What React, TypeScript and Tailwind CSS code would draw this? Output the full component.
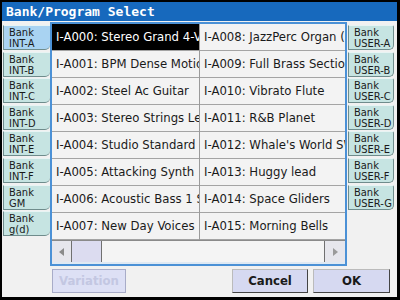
import React from 'react';

const left = ['INT-A', 'INT-B', 'INT-C', 'INT-D', 'INT-E', 'INT-F', 'GM', 'g(d)'];
const right = ['USER-A', 'USER-B', 'USER-C', 'USER-D', 'USER-E', 'USER-F', 'USER-G'];

const col1 = [
  'I-A000: Stereo Grand 4-Voice',
  'I-A001: BPM Dense Motion',
  'I-A002: Steel Ac Guitar',
  'I-A003: Stereo Strings Legato',
  'I-A004: Studio Standard Kit',
  'I-A005: Attacking Synth',
  'I-A006: Acoustic Bass 1 Solo',
  'I-A007: New Day Voices',
];
const col2 = [
  'I-A008: JazzPerc Organ (',
  'I-A009: Full Brass Section',
  'I-A010: Vibrato Flute',
  'I-A011: R&B Planet',
  "I-A012: Whale's World SW",
  'I-A013: Huggy lead',
  'I-A014: Space Gliders',
  'I-A015: Morning Bells',
];

const cond = { fontFamily: '"DejaVu Sans Condensed", "DejaVu Sans", sans-serif' };

function Tab({ name, active, side }: { name: string; active?: boolean; side: 'l' | 'r' }) {
  return (
    <div
      className={
        'h-[25px] shrink-0 border border-[#6f8c8c] border-t-[#e8f4f4] pl-[5px] text-[11px] leading-[11px] text-[#1a1a1a] ' +
        (side === 'l' ? 'rounded-br-[5px] border-r-0 ' : 'rounded-br-[5px] rounded-tr-[2px] ') +
        (active ? 'bg-[#a9d3f2]' : 'bg-[#c6e4e2]')
      }
      style={cond}
    >
      <div className="pt-[1px]">Bank</div>
      <div>{name}</div>
    </div>
  );
}

function Row({ text, sel }: { text: string; sel?: boolean }) {
  return (
    <div
      className={
        'flex h-[27px] items-center overflow-hidden whitespace-nowrap border-b border-[#a4a4a4] pl-[4px] text-[13px] ' +
        (sel ? 'bg-black text-white' : 'bg-[#f3f3f3] text-[#1a1a1a]')
      }
      style={cond}
    >
      {text}
    </div>
  );
}

export default function App() {
  return (
    <div className="flex h-[300px] w-[400px] flex-col border-[2px] border-r-[3px] border-b-[3px] border-black bg-[#f1f1f1]">
      <div
        className="flex h-[19px] shrink-0 items-center bg-[#1769bd] pl-[4px] text-[13px] font-bold text-white"
        style={{ fontFamily: '"DejaVu Sans Mono", monospace' }}
      >
        Bank/Program Select
      </div>
      <div className="flex h-[245px] shrink-0">
        <div className="flex w-[48px] shrink-0 flex-col gap-[1.6px] pt-[4px] pl-[1px]">
          {left.map((n, i) => (
            <Tab key={n} name={n} side="l" active={i === 0} />
          ))}
        </div>
        <div className="mt-[1px] flex w-[297px] shrink-0 flex-col border-2 border-[#4b91d6] bg-[#dfe9f3]">
          <div className="flex">
            <div className="w-[148px] border-r border-[#9a9a9a]">
              {col1.map((t, i) => (
                <Row key={t} text={t} sel={i === 0} />
              ))}
            </div>
            <div className="w-0 flex-1">
              {col2.map((t) => (
                <Row key={t} text={t} />
              ))}
            </div>
          </div>
          <div className="flex h-[22px] items-stretch border-t border-[#8a8a8a] bg-[#f4f4f4]">
            <div className="flex w-[20px] items-center justify-center border-r border-[#707070] bg-[#e6e6ec]">
              <svg width="5" height="8" viewBox="0 0 5 8">
                <path d="M5 0 L0 4 L5 8Z" fill="#8a8a8a" />
              </svg>
            </div>
            <div className="w-[30px] border-r border-[#707070] bg-[#dcdcf0]" />
            <div className="flex-1" />
            <div className="flex w-[21px] items-center justify-center border-l border-[#707070] bg-[#e6e6ec]">
              <svg width="5" height="8" viewBox="0 0 5 8">
                <path d="M0 0 L5 4 L0 8Z" fill="#9a9a9a" />
              </svg>
            </div>
          </div>
        </div>
        <div className="flex w-[47px] shrink-0 flex-col gap-[1.6px] pt-[4px] pl-[1px]">
          {right.map((n) => (
            <Tab key={n} name={n} side="r" />
          ))}
        </div>
      </div>
      <div className="flex flex-1 items-start pt-[3px] pl-[50px] font-bold" style={cond}>
        <div className="flex h-[24px] w-[74px] items-center justify-center border border-[#a8acc8] bg-[#dde0f5] text-[13px] text-[#c3c7e2]">
          Variation
        </div>
        <div className="ml-[106px] flex h-[24px] w-[76px] items-center justify-center border border-[#444] border-t-[#bbb] border-l-[#bbb] bg-[#d6d9f1] text-[13px] text-[#1a1a1a]">
          Cancel
        </div>
        <div className="ml-[5px] flex h-[24px] w-[77px] items-center justify-center border border-[#444] border-t-[#bbb] border-l-[#bbb] bg-[#d6d9f1] text-[13px] text-[#1a1a1a]">
          OK
        </div>
      </div>
    </div>
  );
}
